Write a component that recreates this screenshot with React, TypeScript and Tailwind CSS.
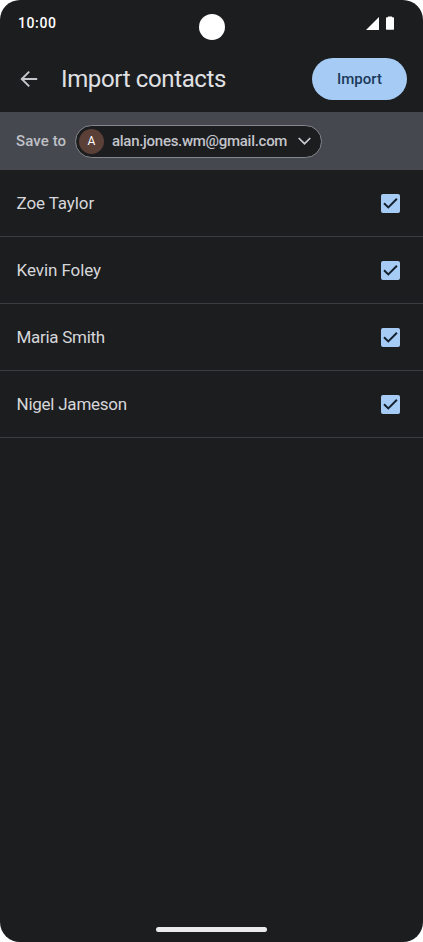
import React, { useState } from 'react';

const contacts = [
  { name: 'Zoe Taylor', tracking: 'tracking-[-0.1px]' },
  { name: 'Kevin Foley', tracking: 'tracking-[-0.07px]' },
  { name: 'Maria Smith', tracking: 'tracking-[-0.28px]' },
  { name: 'Nigel Jameson', tracking: 'tracking-[-0.24px]' },
];

const StatusBar = () => (
  <div className="relative flex h-[46px] items-center justify-between pr-[29px] pl-[18px]">
    <span className="text-[14px] leading-[16px] font-medium tracking-[0.6px] text-white">10:00</span>
    <div className="absolute top-[14px] left-[198.5px] size-[26px] rounded-full bg-white" />
    <div className="flex items-center gap-[7px]">
      <svg width="13" height="13" viewBox="0 0 13 13" fill="#fff">
        <path d="M13 0v13H0z" />
      </svg>
      <svg width="8" height="14" viewBox="0 0 8 14" fill="#fff">
        <path d="M2 1.3V.5h4v.8h1.2q.8 0 .8.8v11q0 .6-.6.6H.6q-.6 0-.6-.6v-11q0-.8.8-.8z" />
      </svg>
    </div>
  </div>
);

const Checkbox = ({ checked, label, onToggle }: { checked: boolean; label: string; onToggle: () => void }) => (
  <button type="button" role="checkbox" aria-checked={checked} aria-label={label} onClick={onToggle}>
    <svg className="block" width="19" height="19" viewBox="0 0 19 19" fill="none">
      {checked ? (
        <>
          <rect width="19" height="19" rx="2" fill="#a6ccf5" />
          <path d="M3 9.2l4.3 4.2 8.6-8.6" stroke="#14222f" strokeWidth="2" />
        </>
      ) : (
        <rect x="1" y="1" width="17" height="17" rx="2" stroke="#c4c6cc" strokeWidth="2" />
      )}
    </svg>
  </button>
);

export default function App() {
  const [selected, setSelected] = useState(contacts.map(() => true));

  const toggle = (index: number) => {
    setSelected((prev) => prev.map((value, i) => (i === index ? !value : value)));
  };

  return (
    <div className="h-[942px] w-[423px] bg-white font-['Roboto','Liberation_Sans',sans-serif]">
      <div className="flex h-full flex-col overflow-hidden rounded-[20px] bg-[#1c1d1f]">
        <StatusBar />

        {/* Header */}
        <header className="flex h-[66px] items-center pr-[16px] pl-[20px]">
          <button type="button" aria-label="Back">
            <svg className="block" width="18" height="18" viewBox="0 0 18 18" fill="none" stroke="#c5c6cb" strokeWidth="2">
              <path d="M17.2 9H2.2M9.2 1.6L1.8 9l7.4 7.4" />
            </svg>
          </button>
          <h1 className="ml-[23px] text-[24px] leading-[30px] tracking-[-0.36px] whitespace-nowrap text-[#e0e1e4]">
            Import contacts
          </h1>
          <button
            type="button"
            className="ml-auto h-[42px] w-[95px] rounded-full bg-[#a6ccf5] text-[15px] font-medium text-[#1b3a5b]"
          >
            Import
          </button>
        </header>

        {/* Target account */}
        <div className="flex h-[58px] items-center bg-[#46484f] pl-[16px]">
          <span className="w-[59px] text-[15px] font-medium tracking-[0.1px] whitespace-nowrap text-[#bfc0c7]">
            Save to
          </span>
          <button
            type="button"
            className="flex h-[33px] w-[247px] items-center rounded-full border border-[#85878e] bg-[#1c1d1f] pl-[3px]"
          >
            <span className="flex size-[25px] items-center justify-center rounded-full bg-[#5b4037] text-[12px] text-white">
              A
            </span>
            <span className="ml-[8px] text-[15px] font-medium tracking-[-0.28px] whitespace-nowrap text-[#c3c4cb]">
              alan.jones.wm@gmail.com
            </span>
            <svg className="mr-[10px] ml-auto" width="13" height="8" viewBox="0 0 13 8" fill="none" stroke="#c9cad0" strokeWidth="1.7">
              <path d="M.7 1l5.8 5.7L12.3 1" />
            </svg>
          </button>
        </div>

        {/* Contacts */}
        <ul>
          {contacts.map((contact, index) => (
            <li
              key={contact.name}
              className="flex h-[67.1px] items-center justify-between border-b border-[#3b3c3f] pr-[23px] pl-[16.5px]"
            >
              <span className={`text-[17px] leading-[20px] whitespace-nowrap text-[#d6d7da] ${contact.tracking}`}>
                {contact.name}
              </span>
              <Checkbox checked={selected[index]} label={contact.name} onToggle={() => toggle(index)} />
            </li>
          ))}
        </ul>

        <div className="mx-auto mt-auto mb-[10px] h-[5px] w-[111px] rounded-full bg-[#ebebed]" />
      </div>
    </div>
  );
}
